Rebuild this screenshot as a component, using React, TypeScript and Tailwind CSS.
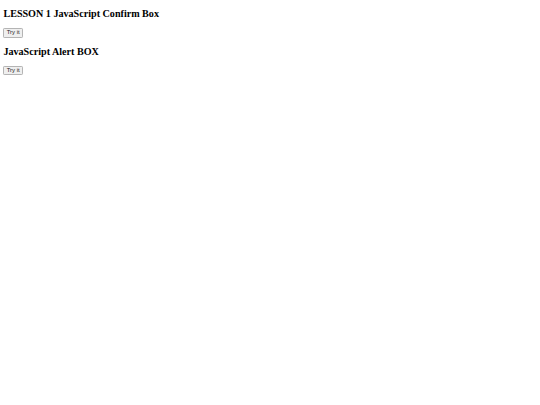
export default function App() {
  const sections = ["LESSON 1 JavaScript Confirm Box", "JavaScript Alert BOX"];

  return (
    <div className="min-h-[405px] bg-white px-[3.4px] text-black">
      {sections.map((title) => (
        <div key={title}>
          <h2 className="my-[8.4px] font-['Liberation_Serif',serif] text-[10.125px] font-bold leading-[1.15]">
            {title}
          </h2>
          <div className="flex h-[9px] items-start">
            <button
              type="button"
              className="box-border flex h-[9.4px] w-[19.5px] items-center justify-center rounded-[1.2px] border border-[#b4b4b4] bg-[#efefef] font-['Liberation_Sans',sans-serif] text-[5.9px] leading-none text-[#222]"
            >
              Try it
            </button>
          </div>
        </div>
      ))}
    </div>
  );
}
